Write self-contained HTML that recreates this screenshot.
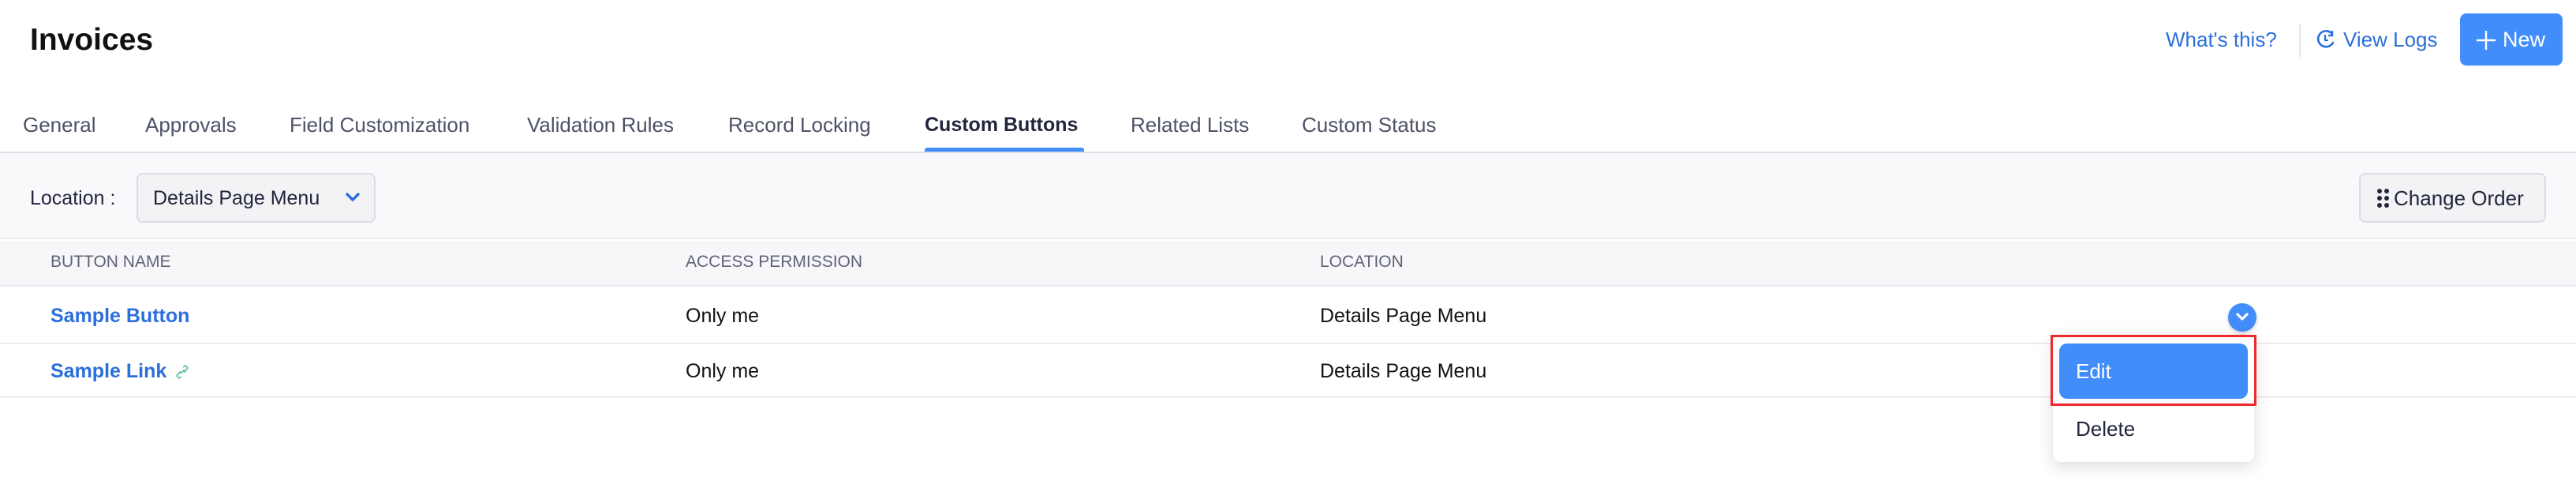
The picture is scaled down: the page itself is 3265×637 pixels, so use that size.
<!DOCTYPE html>
<html><head><meta charset="utf-8"><style>
*{margin:0;padding:0;box-sizing:border-box}
body{width:3265px;height:637px;background:#fff;font-family:"Liberation Sans",sans-serif;position:relative;overflow:hidden;color:#21263c}
.a{position:absolute;white-space:nowrap}
.tab{position:absolute;top:140px;font-size:26px;color:#4d5266;line-height:36px}
.blue{color:#2a6fdb}
</style></head><body>
<div class="a" style="left:38px;top:26px;font-size:39px;font-weight:600;color:#111;line-height:50px">Invoices</div>

<div class="a blue" style="left:2745px;top:30px;font-size:26px;line-height:40px">What's this?</div>
<div class="a" style="left:2914px;top:30px;width:2px;height:42px;background:#e6e7ec"></div>
<svg class="a" style="left:2935px;top:37px" width="26" height="26" viewBox="0 0 26 26"><path d="M21 6 A10 10 0 1 0 22 17" fill="none" stroke="#2a6fdb" stroke-width="2.6" stroke-linecap="round"/><path d="M21 3 V8 H17" fill="none" stroke="#2a6fdb" stroke-width="2.4" stroke-linecap="round"/><path d="M12 8 V14 H15" fill="none" stroke="#2a6fdb" stroke-width="2.2" stroke-linecap="round"/></svg>
<div class="a blue" style="left:2970px;top:30px;font-size:26px;line-height:40px">View Logs</div>
<div class="a" style="left:3118px;top:17px;width:130px;height:66px;background:#408dfb;border-radius:8px"></div>
<svg class="a" style="left:3138px;top:38px" width="26" height="26"><path d="M13 1V25M1 13H25" stroke="#fff" stroke-width="2.4"/></svg>
<div class="a" style="left:3172px;top:30px;font-size:27px;color:#fff;line-height:40px">New</div>

<div class="tab" style="left:29px">General</div>
<div class="tab" style="left:184px">Approvals</div>
<div class="tab" style="left:367px">Field Customization</div>
<div class="tab" style="left:668px">Validation Rules</div>
<div class="tab" style="left:923px">Record Locking</div>
<div class="tab" style="left:1172px;color:#21263c;font-weight:700;font-size:25px">Custom Buttons</div>
<div class="tab" style="left:1433px">Related Lists</div>
<div class="tab" style="left:1650px">Custom Status</div>
<div class="a" style="left:1172px;top:187px;width:202px;height:5px;background:#408dfb;border-radius:3px 3px 0 0"></div>
<div class="a" style="left:0;top:192px;width:3265px;height:2px;background:#dfe1e7"></div>

<div class="a" style="left:0;top:194px;width:3265px;height:109px;background:#f9f9fb;border-bottom:2px solid #ebebf0"></div>
<div class="a" style="left:38px;top:233px;font-size:25px;line-height:36px;color:#21263c">Location :</div>
<div class="a" style="left:173px;top:219px;width:303px;height:63px;background:#f3f3f5;border:2px solid #dcdde2;border-radius:8px"></div>
<div class="a" style="left:194px;top:233px;font-size:25px;line-height:36px;color:#21263c">Details Page Menu</div>
<svg class="a" style="left:437px;top:243px" width="20" height="14"><path d="M3 3L10 10L17 3" fill="none" stroke="#2a6fdb" stroke-width="3.4" stroke-linecap="round" stroke-linejoin="round"/></svg>
<div class="a" style="left:2990px;top:219px;width:237px;height:63px;background:#f3f3f5;border:2px solid #dcdde2;border-radius:8px"></div>
<svg class="a" style="left:3012px;top:238px" width="18" height="26"><g fill="#21263c"><circle cx="4" cy="4" r="3"/><circle cx="13" cy="4" r="3"/><circle cx="4" cy="13" r="3"/><circle cx="13" cy="13" r="3"/><circle cx="4" cy="22" r="3"/><circle cx="13" cy="22" r="3"/></g></svg>
<div class="a" style="left:3034px;top:233px;font-size:26px;line-height:36px;color:#21263c">Change Order</div>

<div class="a" style="left:0;top:305px;width:3265px;height:58px;background:#f7f7fa;border-bottom:2px solid #ebebf0"></div>
<div class="a" style="left:64px;top:320px;font-size:21px;line-height:24px;color:#5f6377">BUTTON NAME</div>
<div class="a" style="left:869px;top:320px;font-size:21px;line-height:24px;color:#5f6377">ACCESS PERMISSION</div>
<div class="a" style="left:1673px;top:320px;font-size:21px;line-height:24px;color:#5f6377">LOCATION</div>

<div class="a blue" style="left:64px;top:382px;font-size:25px;line-height:36px;font-weight:600">Sample Button</div>
<div class="a" style="left:869px;top:382px;font-size:25px;line-height:36px;color:#111">Only me</div>
<div class="a" style="left:1673px;top:382px;font-size:25px;line-height:36px;color:#111">Details Page Menu</div>
<div class="a" style="left:0;top:434px;width:3265px;height:2px;background:#ebebf0"></div>
<div class="a blue" style="left:64px;top:452px;font-size:25px;line-height:36px;font-weight:600">Sample Link</div>
<svg class="a" style="left:222px;top:461px" width="18" height="20"><path d="M10 4l3-2 3 3-4 5-2-1M8 16l-3 2-3-3 4-5 2 1M7 12l5-5" fill="none" stroke="#4cc08e" stroke-width="1.5"/></svg>
<div class="a" style="left:869px;top:452px;font-size:25px;line-height:36px;color:#111">Only me</div>
<div class="a" style="left:1673px;top:452px;font-size:25px;line-height:36px;color:#111">Details Page Menu</div>
<div class="a" style="left:0;top:502px;width:3265px;height:2px;background:#ebebf0"></div>

<div class="a" style="left:2824px;top:384px;width:36px;height:36px;border-radius:50%;background:#408dfb;box-shadow:0 2px 5px rgba(0,0,0,.2)"></div>
<svg class="a" style="left:2832px;top:394px" width="20" height="16"><path d="M4 4L10 10L16 4" fill="none" stroke="#fff" stroke-width="3.2" stroke-linecap="round" stroke-linejoin="round"/></svg>

<div class="a" style="left:2602px;top:424px;width:255px;height:161px;background:#fff;border-radius:10px;box-shadow:0 6px 20px rgba(60,60,90,.18)"></div>
<div class="a" style="left:2610px;top:435px;width:239px;height:70px;background:#408dfb;border-radius:10px"></div>
<div class="a" style="left:2631px;top:452px;font-size:26px;line-height:36px;color:#fff">Edit</div>
<div class="a" style="left:2599px;top:424px;width:261px;height:90px;border:3px solid #f0282d"></div>
<div class="a" style="left:2631px;top:525px;font-size:26px;line-height:36px;color:#21263c">Delete</div>
</body></html>
